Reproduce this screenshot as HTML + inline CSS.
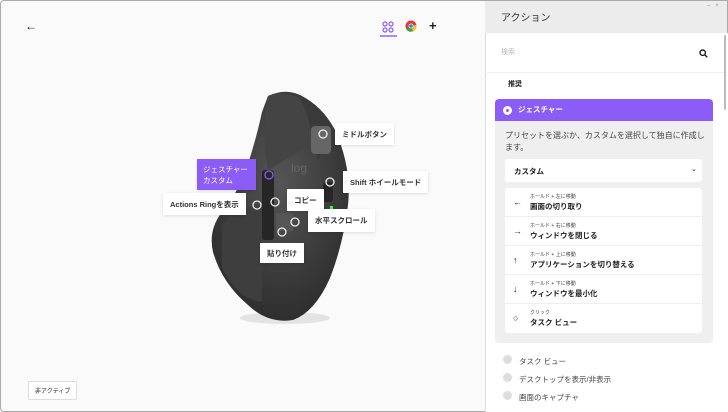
<!DOCTYPE html>
<html><head><meta charset="utf-8"><style>
*{margin:0;padding:0;box-sizing:border-box}
body{width:728px;height:412px;overflow:hidden;font-family:"Liberation Sans","Noto Sans CJK JP",sans-serif;background:#fafafa;position:relative;color:#222}
.a{position:absolute}
.lbl{position:absolute;background:#fff;font-size:7.5px;font-weight:bold;color:#333;padding:0 7px;display:flex;align-items:center;box-shadow:0 1px 3px rgba(0,0,0,.12);height:22px;white-space:nowrap}
.row{position:absolute;left:0;width:197px;height:29px;border-bottom:1px solid #eee}
.row .ic{position:absolute;left:8px;top:9px;font-size:9px;font-weight:bold}
.row .s{position:absolute;left:25px;top:5px;font-size:5px;color:#444}
.row .t{position:absolute;left:25px;top:13px;font-size:7.5px;font-weight:bold;color:#222}
.opt{position:absolute;left:503px;font-size:7.5px;color:#444}
.opt:before{content:"";position:absolute;left:0;top:-1px;width:9px;height:9px;border-radius:50%;background:#ddd}
.opt span{margin-left:16px}
</style></head><body>
<div class="a" style="left:0;top:0;width:728px;height:412px;border:1px solid #aaa;border-radius:4px"></div>
<div class="a" style="left:25px;top:19px;font-size:12px;font-weight:bold">←</div>
<svg class="a" style="left:382px;top:21px" width="12" height="12" viewBox="0 0 12 12" fill="none" stroke="#8b5cf6" stroke-width="1.2"><circle cx="3" cy="3" r="2"/><circle cx="9" cy="3" r="2"/><circle cx="3" cy="9" r="2"/><circle cx="9" cy="9" r="2"/></svg>
<div class="a" style="left:380px;top:35px;width:17px;height:1.5px;background:#a78bfa"></div>
<svg class="a" style="left:405px;top:20px" width="12" height="12" viewBox="0 0 12 12"><circle cx="6" cy="6" r="5.5" fill="#e53935"/><path d="M6 6 L1 9 A5.5 5.5 0 0 0 8 11.3Z" fill="#43a047"/><path d="M6 6 L8 11.3 A5.5 5.5 0 0 0 11.5 5Z" fill="#fbc02d"/><circle cx="6" cy="6" r="2.4" fill="#fff"/><circle cx="6" cy="6" r="1.8" fill="#1e88e5"/></svg>
<div class="a" style="left:429px;top:18px;font-size:13px;font-weight:bold">+</div>

<svg class="a" style="left:200px;top:85px" width="170" height="245" viewBox="200 85 170 245">
<defs><radialGradient id="g" cx="0.5" cy="0.4" r="0.6"><stop offset="0" stop-color="#555"/><stop offset="1" stop-color="#2e2e2e"/></radialGradient></defs>
<ellipse cx="285" cy="318" rx="45" ry="6" fill="#ccc" opacity=".5"/>
<path d="M268 96 Q285 88 300 95 Q322 106 335 130 Q352 168 348 205 Q343 245 330 278 Q315 312 293 320 Q268 324 248 305 Q222 283 213 252 Q208 230 222 212 Q238 192 246 170 Q256 140 262 112Z" fill="url(#g)"/>
<path d="M268 96 Q282 90 298 97 Q309 112 312 140 Q300 152 285 160 L268 170 Q262 140 268 96Z" fill="#444"/>
<path d="M300 95 Q325 108 336 133 L318 160 L312 140 Q309 112 300 95Z" fill="#3a3a3a"/>
<rect x="311" y="126" width="20" height="28" rx="4" fill="#666"/>
<path d="M222 225 Q242 205 262 205 L262 302 Q238 300 222 268Z" fill="#3e3e3e"/>
<rect x="262" y="170" width="12" height="70" rx="3" fill="#262626"/>
<rect x="276" y="213" width="17" height="18" rx="2" fill="#555"/>
<rect x="323" y="182" width="10" height="20" rx="3" fill="#262626"/>
<rect x="330" y="206" width="3" height="4" fill="#3f3"/>
<text x="291" y="172" font-size="12" fill="#666" font-family="Liberation Sans">log</text>
<g fill="none" stroke="#eee" stroke-width="1.3"><circle cx="323" cy="134" r="4"/><circle cx="330" cy="182" r="4"/><circle cx="275" cy="202" r="4"/><circle cx="257" cy="205" r="4"/><circle cx="282" cy="232" r="4"/><circle cx="295" cy="222" r="4"/></g>
<circle cx="269" cy="175" r="4" fill="none" stroke="#8b5cf6" stroke-width="1.3"/>
</svg>
<div class="lbl" style="left:335px;top:123px;height:22px">ミドルボタン</div>
<div class="lbl" style="left:343px;top:171px">Shift ホイールモード</div>
<div class="lbl" style="left:287px;top:189px">コピー</div>
<div class="lbl" style="left:308px;top:209px;height:23px">水平スクロール</div>
<div class="lbl" style="left:163px;top:193px">Actions Ringを表示</div>
<div class="lbl" style="left:260px;top:243px;height:20px">貼り付け</div>
<div class="lbl" style="left:197px;top:159px;height:31px;width:59px;background:#8b5cf6;color:#fff;font-weight:normal;line-height:11px;padding:0 6px">ジェスチャー<br>カスタム</div>
<div class="a" style="left:28px;top:381px;font-size:6px;border:1px solid #ddd;background:#fff;padding:4px 6px;border-radius:2px">非アクティブ</div>

<div class="a" style="left:485px;top:0;width:243px;height:412px;background:#fff;border-left:1px solid #ddd"></div>
<div class="a" style="left:485px;top:0;width:243px;height:33px;background:#ececec;border-top:1px solid #aaa;border-right:1px solid #aaa"></div>
<div class="a" style="left:501px;top:9px;font-size:10px;color:#333">アクション</div>
<div class="a" style="left:707px;top:3px;font-size:6px;color:#999">–&nbsp;&nbsp;&nbsp;×</div>
<div class="a" style="left:501px;top:47px;font-size:7px;color:#bbb">検索</div>
<svg class="a" style="left:699px;top:49px" width="9" height="9" viewBox="0 0 9 9" fill="none" stroke="#222" stroke-width="1.4"><circle cx="3.7" cy="3.7" r="2.7"/><path d="M5.7 5.7 L8.3 8.3"/></svg>
<div class="a" style="left:485px;top:72px;width:240px;height:1px;background:#f0f0f0"></div>
<div class="a" style="left:508px;top:79px;font-size:7px;font-weight:bold">推奨</div>
<div class="a" style="left:495px;top:121px;width:218px;height:222px;background:#efefef;border-radius:0 0 4px 4px"></div>
<div class="a" style="left:495px;top:99px;width:218px;height:22px;background:#8b5cf6;border-radius:4px 4px 0 0"></div>
<div class="a" style="left:503px;top:106px;width:9px;height:9px;border-radius:50%;background:#fff"></div>
<div class="a" style="left:506px;top:109px;width:3px;height:3px;border-radius:50%;background:#8b5cf6"></div>
<div class="a" style="left:518px;top:104px;font-size:7.5px;color:#fff;font-weight:bold">ジェスチャー</div>
<div class="a" style="left:505px;top:130px;font-size:8px;color:#444;line-height:12px;width:205px">プリセットを選ぶか、カスタムを選択して独自に作成します。</div>
<div class="a" style="left:505px;top:159px;width:197px;height:23px;background:#fff;border-radius:3px"></div>
<div class="a" style="left:514px;top:166px;font-size:7.5px;font-weight:bold">カスタム</div>
<div class="a" style="left:691px;top:165px;font-size:7px">⌄</div>
<div class="a" style="left:505px;top:188px;width:197px;height:145px;background:#fff;border-radius:3px">
<div class="row" style="top:0"><span class="ic">←</span><span class="s">ホールド + 左に移動</span><span class="t">画面の切り取り</span></div>
<div class="row" style="top:29px"><span class="ic">→</span><span class="s">ホールド + 右に移動</span><span class="t">ウィンドウを閉じる</span></div>
<div class="row" style="top:58px"><span class="ic">↑</span><span class="s">ホールド + 上に移動</span><span class="t">アプリケーションを切り替える</span></div>
<div class="row" style="top:87px"><span class="ic">↓</span><span class="s">ホールド + 下に移動</span><span class="t">ウィンドウを最小化</span></div>
<div class="row" style="top:116px;border:0"><span class="ic">○</span><span class="s">クリック</span><span class="t">タスク ビュー</span></div>
</div>
<div class="opt" style="top:356px"><span>タスク ビュー</span></div>
<div class="opt" style="top:374px"><span>デスクトップを表示/非表示</span></div>
<div class="opt" style="top:392px"><span>画面のキャプチャ</span></div>
<div class="a" style="left:724px;top:35px;width:2px;height:75px;background:#bbb;border-radius:1px"></div>
</body></html>
